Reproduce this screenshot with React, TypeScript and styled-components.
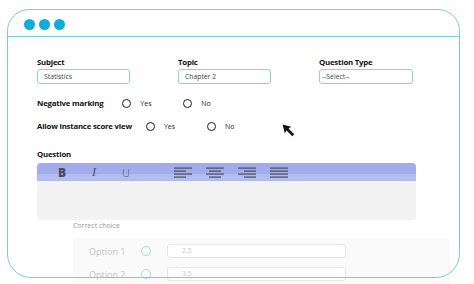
import React from 'react'
import styled, { createGlobalStyle } from 'styled-components'

const GlobalStyle = createGlobalStyle`
  html, body {
    margin: 0;
    padding: 0;
    background: #ffffff;
  }
  body {
    font-family: 'Open Sans', 'Liberation Sans', sans-serif;
  }
`

const colors = {
  frame: '#74cfdc',
  dot: '#0aaed6',
  inputBorder: '#86d6e0',
  toolbar: '#a3acea',
  toolbarLow: '#b4bbf0',
  editor: '#f2f2f2',
  text: '#111111',
  icon: '#4a4b5e',
}

export default function App() {
  return (
    <>
      <GlobalStyle />
      <Page>
        <Frame>
          <TitleBar>
            <Dot />
            <Dot />
            <Dot />
          </TitleBar>

          <Body>
            <FieldGrid>
              <Field>
                <Label>Subject</Label>
                <Input>Statistics</Input>
              </Field>
              <Field>
                <Label>Topic</Label>
                <Input>Chapter 2</Input>
              </Field>
              <Field>
                <Label>Question Type</Label>
                <Input $select>--Select--</Input>
              </Field>
            </FieldGrid>

            <ChoiceRow $gap={19}>
              <Label>Negative marking</Label>
              <Choice><Radio /><ChoiceText>Yes</ChoiceText></Choice>
              <Choice><Radio /><ChoiceText>No</ChoiceText></Choice>
            </ChoiceRow>

            <ChoiceRow $gap={14} $top={11}>
              <Label>Allow instance score view</Label>
              <Choice><Radio /><ChoiceText>Yes</ChoiceText></Choice>
              <Choice><Radio /><ChoiceText>No</ChoiceText></Choice>
            </ChoiceRow>

            <QuestionLabel>Question</QuestionLabel>
            <Editor>
              <Toolbar>
                <ToolGroup>
                  <Tool $bold>B</Tool>
                  <Tool $italic>I</Tool>
                  <Tool>U</Tool>
                </ToolGroup>
                <ToolGroup $offset={25}>
                  <Tool><AlignIcon kind="left" /></Tool>
                  <Tool><AlignIcon kind="center" /></Tool>
                  <Tool><AlignIcon kind="right" /></Tool>
                  <Tool><AlignIcon kind="justify" /></Tool>
                </ToolGroup>
              </Toolbar>
              <EditorArea />
            </Editor>

            <CorrectChoice>Correct choice</CorrectChoice>
            <OptionsPanel>
              <OptionRow>
                <OptionName>Option 1</OptionName>
                <FadedRadio />
                <OptionInput>2.5</OptionInput>
              </OptionRow>
              <OptionRow>
                <OptionName>Option 2</OptionName>
                <FadedRadio />
                <OptionInput>3.5</OptionInput>
              </OptionRow>
            </OptionsPanel>
          </Body>
        </Frame>

        <Cursor width="13" height="13" viewBox="0 0 12 12">
          <path d="M0.5 0.5 L8.5 2.6 L6 4.2 L11.3 9.5 L9.5 11.3 L4.2 6 L2.6 8.5 Z" fill="#111" />
        </Cursor>
      </Page>
    </>
  )
}

const AlignIcon = ({ kind }: { kind: 'left' | 'center' | 'right' | 'justify' }) => {
  const rows = [18, 12, 18, 12]
  return (
    <svg width="18" height="11" viewBox="0 0 18 11">
      {rows.map((w, i) => {
        const width = kind === 'justify' ? 18 : w
        const x = kind === 'left' || kind === 'justify' ? 0 : kind === 'right' ? 18 - width : (18 - width) / 2
        return <rect key={i} x={x} y={i * 3 + 0.5} width={width} height={1.2} fill={colors.icon} />
      })}
    </svg>
  )
}

const Page = styled.div`
  position: relative;
  width: 474px;
  height: 284px;
  overflow: hidden;
  padding: 9px 0 0 7px;
  box-sizing: border-box;
`

const Frame = styled.div`
  position: relative;
  width: 453px;
  height: 269px;
  box-sizing: border-box;

  &::after {
    content: '';
    position: absolute;
    inset: 0;
    border: 1.5px solid ${colors.frame};
    border-radius: 22px 22px 24px 24px;
    pointer-events: none;
    z-index: 2;
  }
`

const TitleBar = styled.div`
  display: flex;
  align-items: center;
  gap: 4px;
  height: 28px;
  box-sizing: border-box;
  padding: 3px 0 0 17px;
  border-bottom: 1.5px solid ${colors.frame};
`

const Dot = styled.span`
  width: 11px;
  height: 11px;
  border-radius: 50%;
  background: ${colors.dot};
`

const Body = styled.div`
  padding: 20px 0 0 30px;
`

const FieldGrid = styled.div`
  display: grid;
  grid-template-columns: 93px 93px 94px;
  column-gap: 48px;
`

const Field = styled.div`
  display: flex;
  flex-direction: column;
  gap: 2px;
`

const Label = styled.div`
  font-size: 7.8px;
  line-height: 10px;
  font-weight: 700;
  letter-spacing: -0.2px;
  color: ${colors.text};
  white-space: nowrap;
`

const Input = styled.div<{ $select?: boolean }>`
  height: 15px;
  box-sizing: border-box;
  border: 1px solid ${colors.inputBorder};
  border-radius: 3px;
  padding-left: ${p => (p.$select ? 2 : 6)}px;
  font-size: 6.8px;
  line-height: 13px;
  color: #444;
`

const ChoiceRow = styled.div<{ $gap: number; $top?: number }>`
  display: flex;
  align-items: center;
  height: 12px;
  margin-top: ${p => p.$top ?? 13}px;

  & > ${Label} {
    margin-right: ${p => p.$gap}px;
  }
`

const Choice = styled.div`
  display: flex;
  align-items: center;
  gap: 9px;
  width: 61px;
`

const Radio = styled.span`
  width: 9px;
  height: 9px;
  box-sizing: border-box;
  border: 1.3px solid #1a1a1a;
  border-radius: 50%;
`

const ChoiceText = styled.span`
  font-size: 7px;
  color: #222;
`

const QuestionLabel = styled(Label)`
  margin-top: 17px;
`

const Editor = styled.div`
  width: 379px;
  margin-top: 4px;
`

const Toolbar = styled.div`
  display: flex;
  align-items: center;
  height: 18px;
  padding-left: 9px;
  border-radius: 4px 4px 0 0;
  background: linear-gradient(${colors.toolbar} 0 62%, ${colors.toolbarLow} 62% 100%);
`

const ToolGroup = styled.div<{ $offset?: number }>`
  display: flex;
  margin-left: ${p => p.$offset ?? 0}px;
`

const Tool = styled.span<{ $bold?: boolean; $italic?: boolean }>`
  display: flex;
  align-items: center;
  justify-content: center;
  width: 32px;
  height: 18px;
  color: ${colors.icon};
  font-size: ${p => (p.$italic || p.$bold ? 12 : 11)}px;
  font-family: ${p => (p.$italic ? "'Liberation Serif', serif" : "'Open Sans', sans-serif")};
  font-weight: ${p => (p.$bold ? 800 : 300)};
  font-style: ${p => (p.$italic ? 'italic' : 'normal')};
`

const EditorArea = styled.div`
  height: 39px;
  background: ${colors.editor};
  border-radius: 0 0 3px 3px;
`

const CorrectChoice = styled.div`
  margin: 1px 0 0 36px;
  font-size: 7px;
  line-height: 10px;
  color: #9a9a9a;
`

const OptionsPanel = styled.div`
  display: flex;
  flex-direction: column;
  gap: 9px;
  width: 377px;
  height: 60px;
  margin: 7px 0 0 36px;
  padding: 6px 0 0 16px;
  box-sizing: border-box;
  background: #fafafa;
  border-radius: 4px;
`

const OptionRow = styled.div`
  display: flex;
  align-items: center;
  height: 14px;
`

const OptionName = styled.span`
  width: 52px;
  font-size: 9px;
  color: #c4c4c4;
`

const FadedRadio = styled.span`
  width: 10px;
  height: 10px;
  box-sizing: border-box;
  border: 1.2px solid #a9dbe6;
  border-radius: 50%;
`

const OptionInput = styled.div`
  margin-left: 16px;
  width: 179px;
  height: 14px;
  box-sizing: border-box;
  border: 1px solid #e6e6e6;
  border-radius: 3px;
  background: #fff;
  padding-left: 14px;
  font-size: 7px;
  line-height: 12px;
  color: #c8c8c8;
`

const Cursor = styled.svg`
  position: absolute;
  left: 282px;
  top: 124px;
`
